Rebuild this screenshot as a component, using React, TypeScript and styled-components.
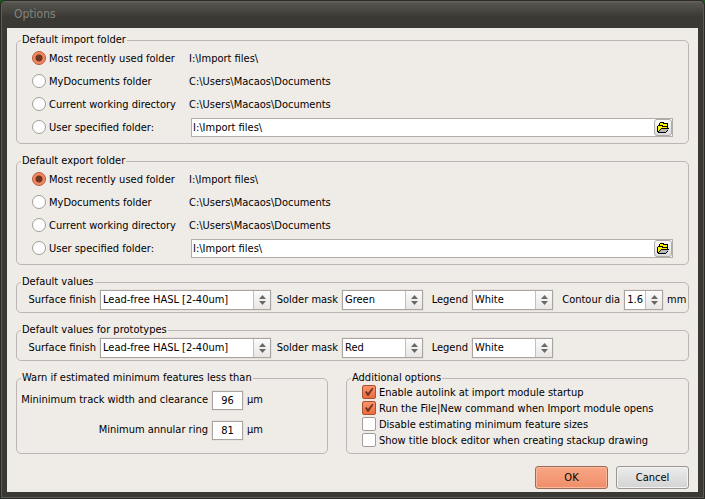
import { useId } from "react";
import styled, { createGlobalStyle } from "styled-components";

const GlobalStyle = createGlobalStyle`
  *, *::before, *::after { box-sizing: border-box; }
  body { margin: 0; background: #1c5a1c; }
  body, input, select, button {
    font-family: "DejaVu Sans Condensed", "DejaVu Sans", sans-serif;
    font-size: 11px;
    line-height: 14px;
    color: #000;
  }
`;

const Window = styled.div`
  min-height: 100vh;
  display: flex;
  flex-direction: column;
  padding: 0 5px 5px;
  background: #3a3934;
  border: 1px solid #2a2926;
  border-radius: 5px 5px 0 0;
  box-shadow: inset 0 0 0 1px #5c5b56;
`;

const TitleBar = styled.header`
  height: 27px;
  margin: 0 -4px;
  padding: 5px 12px 0;
  background: linear-gradient(#6a6964, #55544f 2px, #4a4944 8px, #3a3934 16px);
  border-radius: 4px 4px 0 0;
`;

const Title = styled.h1`
  margin: 0;
  font-size: 12px;
  line-height: 16px;
  font-weight: 400;
  color: #85837e;
`;

const Content = styled.form`
  flex: 1;
  margin: 0 1px 1px;
  padding: 5px 9px 2px;
  background: #efebe7;
  display: flex;
  flex-direction: column;
  gap: 10px;
`;

const Group = styled.fieldset`
  min-width: 0;
  margin: 0;
  padding: 0 4px;
  border: 1px solid #bcb6b6;
  border-radius: 5px;
`;

const GroupTitle = styled.legend`
  padding: 0 1px;
  line-height: 14px;
`;

const FolderRows = styled.div`
  padding: 0 11px 4px;
`;

const FolderRow = styled.div`
  display: grid;
  grid-template-columns: 157px 1fr;
  align-items: center;
  height: 23px;
`;

const Choice = styled.label<{ $height: number }>`
  display: flex;
  align-items: center;
  gap: 3px;
  height: ${(p) => p.$height}px;
  white-space: nowrap;
`;

const Radio = styled.input`
  appearance: none;
  flex: none;
  width: 14px;
  height: 14px;
  margin: 0 0 2px;
  border: 1px solid #a39d99;
  border-radius: 50%;
  background: #fff;
  &:checked {
    border-color: #b5583a;
    background: radial-gradient(circle, #6e3522 0 3px, #f0845a 4px, #f58a62 6px);
  }
`;

const PathField = styled.div`
  display: flex;
  height: 19px;
  margin-left: 2px;
  padding: 1px;
  background: #fff;
  border: 1px solid #b3adaa;
`;

const PathInput = styled.input`
  flex: 1;
  min-width: 0;
  padding: 0;
  border: 0;
  background: none;
  outline-offset: -1px;
`;

const BrowseButton = styled.button`
  display: grid;
  place-items: center;
  width: 18px;
  margin: -1px;
  padding: 0;
  border: 1px solid #b0aaa7;
  border-radius: 3px;
  background: linear-gradient(#fafafa, #dcdcdc);
`;

const ValuesRow = styled.div`
  display: grid;
  grid-template-columns: 79px 171px 71px 81px 49px 81px 71px 39px auto;
  align-items: center;
  padding: 1px 0 2px;
`;

const ValueLabel = styled.label`
  padding-right: 4px;
  text-align: right;
  white-space: nowrap;
`;

const Stack = styled.div`
  display: grid;
  grid-template-columns: 1fr 16px;
  height: 20px;
  border: 1px solid #aaa4a1;
  background: linear-gradient(#fafafa, #e9e7e5);
  box-shadow: 0 0 0 1px #e7e2de;
`;

const Select = styled.select`
  appearance: none;
  grid-area: 1 / 1 / 2 / 3;
  min-width: 0;
  margin: 0 16px 0 0;
  padding: 0 2px;
  border: 0;
  border-right: 1px solid #c4bebb;
  border-radius: 0;
  background: #fff;
`;

const NumberInput = styled.input`
  appearance: textfield;
  min-width: 0;
  grid-area: 1 / 1 / 2 / 3;
  margin: 0 16px 0 0;
  padding: 0 2px;
  border: 0;
  border-right: 1px solid #c4bebb;
  background: #fff;
  text-align: right;
  &::-webkit-inner-spin-button { appearance: none; margin: 0; }
`;

const ArrowIcon = styled.svg`
  grid-area: 1 / 2;
  place-self: center;
  pointer-events: none;
`;

const Unit = styled.span`
  padding-left: 4px;
`;

const Pair = styled.div`
  display: grid;
  grid-template-columns: 312fr 343fr;
  gap: 18px;
`;

const LimitRow = styled.div`
  display: grid;
  grid-template-columns: 191px 31px auto;
  align-items: center;
  height: 30px;
`;

const LimitInput = styled.input`
  width: 100%;
  height: 19px;
  padding: 0;
  border: 1px solid #aaa4a1;
  box-shadow: 0 0 0 1px #e7e2de;
  text-align: center;
`;

const Checks = styled.div`
  padding: 0 11px 4px;
`;

const Limits = styled.div`
  padding-bottom: 8px;
`;

const CheckBox = styled.span`
  flex: none;
  display: grid;
  width: 14px;
  height: 14px;
  margin-bottom: 2px;
`;

const CheckInput = styled.input`
  appearance: none;
  grid-area: 1 / 1;
  width: 14px;
  height: 14px;
  margin: 0;
  border: 1px solid #a39d99;
  border-radius: 2px;
  background: #fff;
  &:checked {
    border-color: #a9502f;
    background: linear-gradient(#f9936c, #ec6c3e);
  }
  &:not(:checked) + svg { display: none; }
`;

const TickIcon = styled.svg`
  grid-area: 1 / 1;
  place-self: center;
  pointer-events: none;
`;

const Actions = styled.div`
  display: flex;
  justify-content: flex-end;
  gap: 8px;
  padding-top: 2px;
`;

const ActionButton = styled.button<{ $primary?: boolean }>`
  width: 73px;
  height: 23px;
  padding: 0;
  border: 1px solid ${(p) => (p.$primary ? "#9c6a5a" : "#9a9592")};
  border-radius: 3px;
  background: ${(p) =>
    p.$primary ? "linear-gradient(#f8a685, #f08e69)" : "linear-gradient(#ececec, #d3d3d3)"};
  box-shadow: inset 0 0 0 1px ${(p) => (p.$primary ? "#fbb89c" : "#f3f3f3")};
`;

function Arrows() {
  return (
    <ArrowIcon width="7" height="10" viewBox="0 0 7 10" fill="#6b6967" aria-hidden="true">
      <path d="M0 4L3.5 0L7 4ZM0 6H7L3.5 10Z" />
    </ArrowIcon>
  );
}

function FolderIcon() {
  return (
    <svg width="12" height="11" viewBox="0 0 12 11" shapeRendering="crispEdges" aria-hidden="true">
      <path d="M3 0H7V1H11V6H12V7H11V9H10V10H9V11H1V10H0V4H1V3H2V1H3Z" fill="#000" />
      <path d="M3 1H6V2H10V4H6V3H3ZM1 4H5V5H10V6H4V7H3V8H2V9H1Z" fill="#fff200" />
      <path d="M4 7H11V8H10V9H9V10H2V9H3V8H4Z" fill="#b8b8b8" />
    </svg>
  );
}

function FolderGroup({ title }: { title: string }) {
  const name = useId();
  const presets = [
    ["Most recently used folder", "I:\\Import files\\"],
    ["MyDocuments folder", "C:\\Users\\Macaos\\Documents"],
    ["Current working directory", "C:\\Users\\Macaos\\Documents"],
  ];
  return (
    <Group>
      <GroupTitle>{title}</GroupTitle>
      <FolderRows>
        {presets.map(([label, path], i) => (
          <FolderRow key={label}>
            <Choice $height={23}>
              <Radio type="radio" name={name} defaultChecked={i === 0} />
              {label}
            </Choice>
            <span>{path}</span>
          </FolderRow>
        ))}
        <FolderRow>
          <Choice $height={23}>
            <Radio type="radio" name={name} />
            User specified folder:
          </Choice>
          <PathField>
            <PathInput aria-label="User specified folder" defaultValue={"I:\\Import files\\"} />
            <BrowseButton type="button" aria-label="Browse">
              <FolderIcon />
            </BrowseButton>
          </PathField>
        </FolderRow>
      </FolderRows>
    </Group>
  );
}

function SelectField({ label, value }: { label: string; value: string }) {
  const id = useId();
  return (
    <>
      <ValueLabel htmlFor={id}>{label}</ValueLabel>
      <Stack>
        <Select id={id} defaultValue={value}>
          <option>{value}</option>
        </Select>
        <Arrows />
      </Stack>
    </>
  );
}

function Limit({ label, value }: { label: string; value: string }) {
  const id = useId();
  return (
    <LimitRow>
      <ValueLabel htmlFor={id}>{label}</ValueLabel>
      <LimitInput id={id} defaultValue={value} />
      <Unit>µm</Unit>
    </LimitRow>
  );
}

function CheckOption({ label, checked = false }: { label: string; checked?: boolean }) {
  return (
    <Choice $height={16}>
      <CheckBox>
        <CheckInput type="checkbox" defaultChecked={checked} />
        <TickIcon width="10" height="10" viewBox="0 0 10 10" aria-hidden="true">
          <path d="M1 5L2.5 4L4 6L8 1L9.5 1.5L4.5 9H3.5Z" fill="#6e3522" />
        </TickIcon>
      </CheckBox>
      {label}
    </Choice>
  );
}

export default function App() {
  const contour = useId();
  return (
    <>
      <GlobalStyle />
      <Window>
        <TitleBar>
          <Title>Options</Title>
        </TitleBar>
        <Content onSubmit={(e) => e.preventDefault()}>
          <FolderGroup title="Default import folder" />
          <FolderGroup title="Default export folder" />
          <Group>
            <GroupTitle>Default values</GroupTitle>
            <ValuesRow>
              <SelectField label="Surface finish" value="Lead-free HASL [2-40um]" />
              <SelectField label="Solder mask" value="Green" />
              <SelectField label="Legend" value="White" />
              <ValueLabel htmlFor={contour}>Contour dia</ValueLabel>
              <Stack>
                <NumberInput id={contour} type="number" step="0.1" defaultValue="1.6" />
                <Arrows />
              </Stack>
              <Unit>mm</Unit>
            </ValuesRow>
          </Group>
          <Group>
            <GroupTitle>Default values for prototypes</GroupTitle>
            <ValuesRow>
              <SelectField label="Surface finish" value="Lead-free HASL [2-40um]" />
              <SelectField label="Solder mask" value="Red" />
              <SelectField label="Legend" value="White" />
            </ValuesRow>
          </Group>
          <Pair>
            <Group>
              <GroupTitle>Warn if estimated minimum features less than</GroupTitle>
              <Limits>
                <Limit label="Mininimum track width and clearance" value="96" />
                <Limit label="Minimum annular ring" value="81" />
              </Limits>
            </Group>
            <Group>
              <GroupTitle>Additional options</GroupTitle>
              <Checks>
                <CheckOption label="Enable autolink at import module startup" checked />
                <CheckOption label="Run the File|New command when Import module opens" checked />
                <CheckOption label="Disable estimating minimum feature sizes" />
                <CheckOption label="Show title block editor when creating stackup drawing" />
              </Checks>
            </Group>
          </Pair>
          <Actions>
            <ActionButton type="submit" $primary>
              OK
            </ActionButton>
            <ActionButton type="button">Cancel</ActionButton>
          </Actions>
        </Content>
      </Window>
    </>
  );
}
